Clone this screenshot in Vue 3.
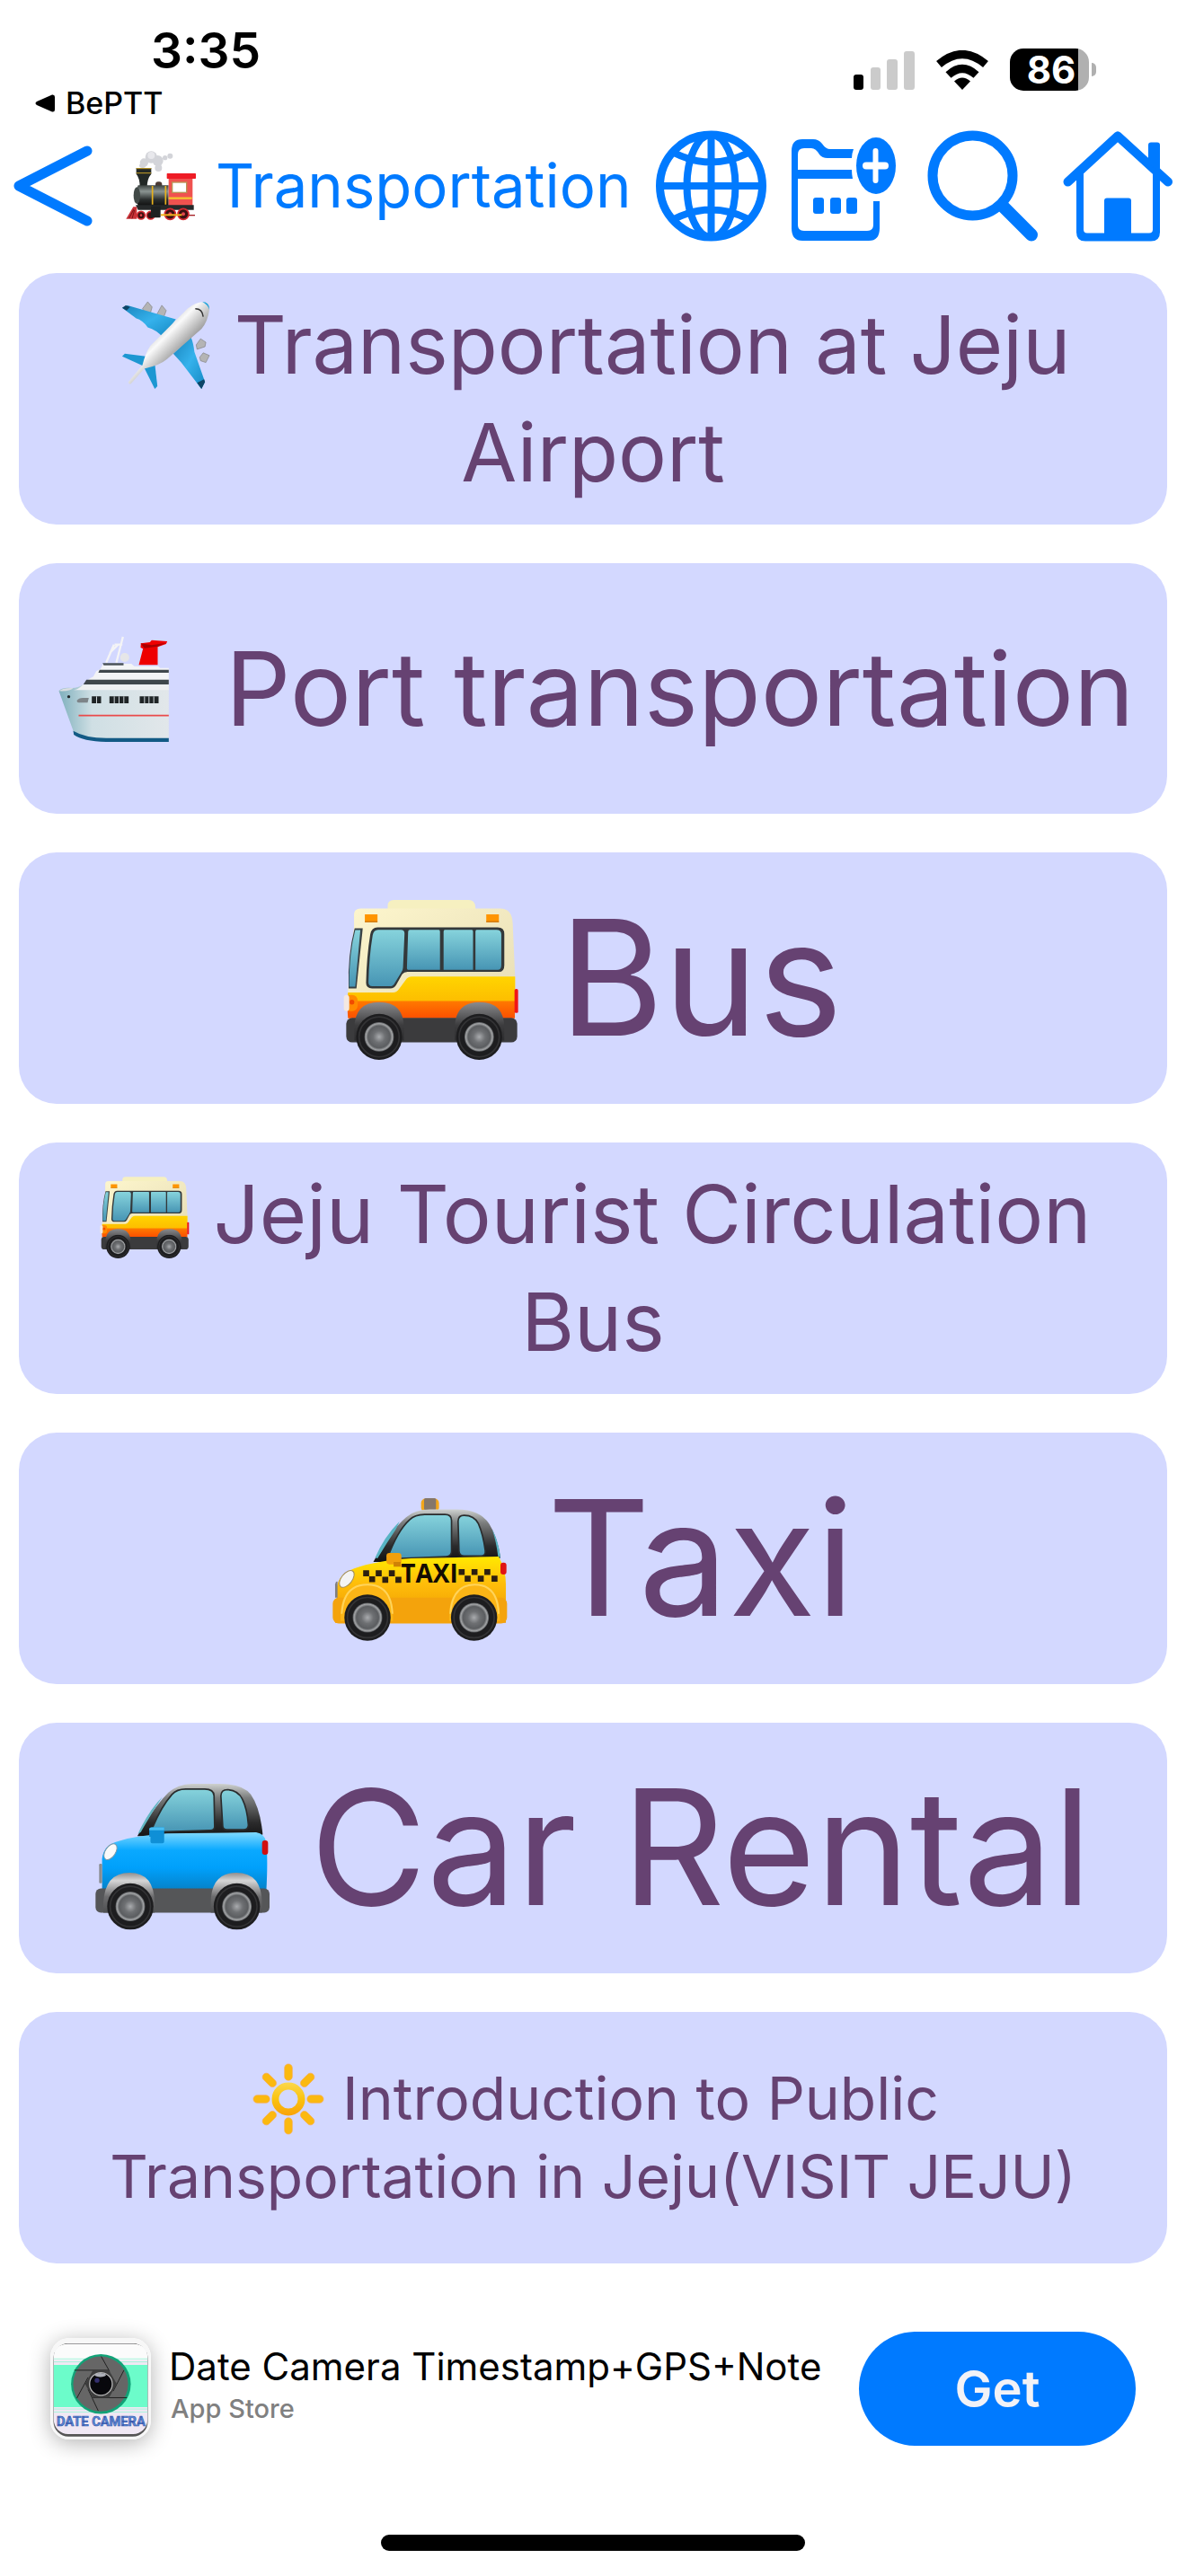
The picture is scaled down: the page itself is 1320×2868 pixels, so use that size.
<template>
  <div class="page">
    <!-- shared artwork -->
    <svg class="sprite" aria-hidden="true">
      <defs>
        <linearGradient id="glass" x1="0" y1="0" x2="0" y2="1">
          <stop offset="0" stop-color="#86d3dc" />
          <stop offset="1" stop-color="#4795b4" />
        </linearGradient>
        <linearGradient id="cream" x1="0" y1="0" x2="1" y2="1">
          <stop offset="0" stop-color="#fdf6cd" />
          <stop offset="1" stop-color="#e6dcb4" />
        </linearGradient>
        <linearGradient id="busYellow" x1="0" y1="0" x2="0" y2="1">
          <stop offset="0" stop-color="#ffd400" />
          <stop offset="1" stop-color="#fdbd00" />
        </linearGradient>
        <linearGradient id="busOrange" x1="0" y1="0" x2="0" y2="1">
          <stop offset="0" stop-color="#ff7a00" />
          <stop offset="1" stop-color="#fb4f00" />
        </linearGradient>
        <linearGradient id="arch" x1="0" y1="0" x2="0" y2="1">
          <stop offset="0" stop-color="#8b8b8d" />
          <stop offset="0.6" stop-color="#3c3c3e" />
          <stop offset="1" stop-color="#2c2c2e" />
        </linearGradient>
        <linearGradient id="carArch" x1="0" y1="0" x2="0" y2="1">
          <stop offset="0" stop-color="#8d8d8d" />
          <stop offset="0.2" stop-color="#d6d6d6" />
          <stop offset="0.6" stop-color="#6c6c6e" />
          <stop offset="1" stop-color="#4e4f51" />
        </linearGradient>
        <linearGradient id="roof" x1="0" y1="0" x2="0" y2="1">
          <stop offset="0" stop-color="#cfd2d0" />
          <stop offset="0.25" stop-color="#7d7f7f" />
          <stop offset="0.7" stop-color="#2b2b2c" />
          <stop offset="1" stop-color="#111" />
        </linearGradient>
        <linearGradient id="carBlue" x1="0" y1="0" x2="0" y2="1">
          <stop offset="0" stop-color="#7fd9ff" />
          <stop offset="0.3" stop-color="#0aa9ff" />
          <stop offset="0.6" stop-color="#00a0fb" />
          <stop offset="1" stop-color="#067fc4" />
        </linearGradient>
        <linearGradient id="taxiYellow" x1="0" y1="0" x2="0" y2="1">
          <stop offset="0" stop-color="#ffe900" />
          <stop offset="0.4" stop-color="#ffbe0a" />
          <stop offset="1" stop-color="#ee9600" />
        </linearGradient>
        <radialGradient id="hub">
          <stop offset="0" stop-color="#a9abae" />
          <stop offset="0.4" stop-color="#6e7073" />
          <stop offset="0.75" stop-color="#5b5d60" />
          <stop offset="0.9" stop-color="#a2a4a6" />
          <stop offset="1" stop-color="#55575a" />
        </radialGradient>
        <linearGradient id="hull" x1="0" y1="0" x2="1" y2="0">
          <stop offset="0" stop-color="#7fb0bd" />
          <stop offset="0.3" stop-color="#cfdfe4" />
          <stop offset="1" stop-color="#e2e7ea" />
        </linearGradient>
        <linearGradient id="wing" x1="0" y1="0" x2="1" y2="1">
          <stop offset="0" stop-color="#1a84bd" />
          <stop offset="0.5" stop-color="#35b2ec" />
          <stop offset="1" stop-color="#1487c2" />
        </linearGradient>
        <linearGradient id="body" x1="0.3" y1="0.3" x2="0.65" y2="0.65">
          <stop offset="0" stop-color="#b9b9b9" />
          <stop offset="0.4" stop-color="#fafafa" />
          <stop offset="1" stop-color="#8f8f8f" />
        </linearGradient>
        <linearGradient id="sunGold" gradientUnits="userSpaceOnUse" x1="0" y1="130" x2="0" y2="268">
          <stop offset="0" stop-color="#fcdc5a" />
          <stop offset="0.5" stop-color="#fac310" />
          <stop offset="1" stop-color="#f99a08" />
        </linearGradient>
        <linearGradient id="boiler" x1="0" y1="0" x2="0" y2="1">
          <stop offset="0" stop-color="#3b4240" />
          <stop offset="0.3" stop-color="#8b9492" />
          <stop offset="0.7" stop-color="#2a2e2e" />
          <stop offset="1" stop-color="#111" />
        </linearGradient>
      </defs>

      <symbol id="wheel" viewBox="0 0 160 160">
        <circle cx="80" cy="80" r="78" fill="#1d1d1f" />
        <circle cx="80" cy="80" r="68" fill="none" stroke="#333335" stroke-width="5" />
        <circle cx="80" cy="80" r="50" fill="url(#hub)" />
      </symbol>

      <symbol id="train" viewBox="84 50 240 240">
        <g fill="#d3d4d9">
          <circle cx="172" cy="74" r="20" />
          <circle cx="148" cy="92" r="14" />
          <circle cx="194" cy="86" r="18" />
          <circle cx="196" cy="110" r="12" />
          <circle cx="218" cy="76" r="8" />
          <circle cx="235" cy="70" r="9" />
          <ellipse cx="143" cy="102" rx="11" ry="8" />
        </g>
        <circle cx="172" cy="68" r="12" fill="#e8e8ec" />
        <rect x="186" y="156" width="22" height="22" rx="9" fill="#4b3a35" />
        <path d="M122 110h50v20q-14 16-14 44h-24q0-30-12-44z" fill="#222826" />
        <path d="M122 112h50M122 127h50" stroke="#c9a227" stroke-width="3" />
        <path d="M128 168h102v68H128q-16-34 0-68z" fill="url(#boiler)" />
        <ellipse cx="124" cy="202" rx="11" ry="28" fill="#414947" />
        <path d="M176 170v62M220 170v62" stroke="#e8b21c" stroke-width="5" />
        <path d="M230 140h80v96h-80z" fill="#f0524f" />
        <rect x="224" y="128" width="97" height="18" rx="2" fill="#ee1c25" />
        <rect x="242" y="158" width="48" height="34" fill="#fff" stroke="#b99254" stroke-width="4" />
        <path d="M230 211h78" stroke="#f4c430" stroke-width="7" />
        <path d="M120 234h194v16H128z" fill="#26292a" />
        <path d="M112 240l-24 40h36v-40z" fill="#c93238" />
        <path d="M98 278l16-30M108 279l8-28" stroke="#7a1418" stroke-width="3" />
        <g fill="#3b1012" stroke="#d52b33" stroke-width="5">
          <circle cx="138" cy="268" r="13" />
          <circle cx="170" cy="268" r="13" />
          <circle cx="235" cy="264" r="18" />
          <circle cx="279" cy="264" r="18" />
        </g>
        <g fill="#e2474d">
          <circle cx="138" cy="268" r="4" />
          <circle cx="235" cy="264" r="6" />
          <circle cx="279" cy="264" r="6" />
        </g>
        <path d="M296 268h22" stroke="#a51d23" stroke-width="4" />
        <rect x="171" y="238" width="32" height="38" rx="3" fill="#1d2021" />
        <path d="M204 267h70" stroke="#f2b31b" stroke-width="6" />
      </symbol>

      <symbol id="plane" viewBox="138 44 102 102">
        <g fill="#b4b4b4" stroke="#777" stroke-width="0.6">
          <path d="M168 46l5 6-2 7-6-1-3-4z" />
          <path d="M184 50l5 6-3 8-8-3z" />
          <path d="M228 88l6 4-1 5-9 3-1-5z" />
          <path d="M231 104l7 3-4 8-6-2-1-4z" />
        </g>
        <path d="M139 53l6-3 55 16-15 20q-7-8-17-11-6-8-13-10z" fill="url(#wing)" />
        <path d="M139 53l4-3 5 2-4 4z" fill="#0d4566" />
        <path d="M217 86q3 7 4 17l12 34-4 8-23-30-9-10z" fill="url(#wing)" />
        <path d="M233 137l-4 8-5-7 8-4z" fill="#0d4566" />
        <path d="M139 108l3-3 24 3-3 11z" fill="#1c97d2" />
        <path d="M164 121l12-5 3 26-3 3z" fill="#1c97d2" />
        <path d="M146 137l16-19q3-13 9-22l42-42q9-8 20-8 6 1 5 9-2 14-9 22l-39 34q-8 7-26 11l-15 17q-3 1-3-2z" fill="url(#body)" />
        <path d="M230 46q8 0 8 9-2-6-8-9z" fill="#1fa2e0" />
        <path d="M222 54q8 0 9 9" fill="none" stroke="#333" stroke-width="1.5" />
      </symbol>

      <symbol id="ship" viewBox="76 80 374 360">
        <path d="M238 172l26-60M272 172l22-86M266 112h26M250 140l28-28" stroke="#f4f4f6" stroke-width="7" fill="none" />
        <circle cx="300" cy="155" r="15" fill="#e6e6e8" />
        <path d="M347 180l14-54-8-4 1-14 30-4 6-7 52 4-4 9-28 10v60z" fill="#ee0000" />
        <path d="M353 108l37 6 48-8-28 12-44 6z" fill="#a90000" />
        <path d="M228 176h94l10 8h80l6 6h29v62H160l20-25 15-8 10-18 14-8z" fill="#f3f4f6" />
        <path d="M226 174h70v7h-66z" fill="#4b5359" />
        <path d="M216 196h231v10H212z" fill="#3f474c" />
        <path d="M172 229h275v16H162z" fill="#3f474c" />
        <path d="M80 267q10-13 44-10 20 0 38-12h285v190H220q-60-2-88-24z" fill="url(#hull)" />
        <path d="M80 267q14-12 48-10-10 12-48 10z" fill="#d9dde0" />
        <path d="M160 246h287v18H130q20-4 30-18z" fill="#eef0f2" />
        <path d="M128 400q40 24 110 24h209v13H238q-78-2-108-24z" fill="#125a85" />
        <path d="M146 349h301" stroke="#ea4a4a" stroke-width="5" />
        <path d="M140 299q6-9 20-9h20l-4 16h-30q-6 0-6-7z" fill="#7d8488" />
        <circle cx="113" cy="286" r="5" fill="#23282b" />
        <path d="M190 285h31v23h-31zM249 285h64v23h-64zM350 285h63v23h-63z" fill="#1f2426" />
        <path d="M206 285v23M265 285v23M281 285v23M297 285v23M366 285v23M381 285v23M397 285v23" stroke="#cfd6da" stroke-width="3" />
      </symbol>

      <symbol id="bus" viewBox="68 66 586 544" preserveAspectRatio="xMidYMax meet">
        <path d="M216 104V92q0-20 20-20h250q20 0 22 24v8z" fill="#f6f0c0" />
        <path d="M104 160v-40q0-20 22-20h466q38 0 40 50l8 180v136H84V370z" fill="url(#cream)" />
        <path d="M84 380h150q12 0 20-12l22-30q8-11 20-11h344v84H80z" fill="url(#busYellow)" />
        <path d="M80 408h559v58H84z" fill="url(#busOrange)" />
        <path d="M106 166h27L112 366H86q-4-110 20-200z" fill="#3a4245" />
        <path d="M108 172h17l-17 188H88q-1-110 20-188z" fill="url(#glass)" />
        <path d="M182 163h400q22 0 22 22v104q0 22-18 22H282q-12 0-18 8l-20 36q-6 11-20 11h-60q-20 0-20-18 2-88 14-162 4-23 24-23z" fill="#33383a" />
        <path d="M184 171h76q12 0 12 12l-5 114q0 8-6 16l-22 36q-5 10-16 10h-58q-14 0-13-14 2-84 14-156 3-18 18-18z" fill="url(#glass)" />
        <path d="M290 171h96q4 0 4 6v127H284q-4 0-4-6l4-120q0-7 6-7zM406 171h90q4 0 4 6v127h-98V177q0-6 4-6zM512 171h66q16 0 16 16v102q0 15-12 15h-74V177q0-6 4-6z" fill="url(#glass)" />
        <path d="M140 120h42v26h-42zM544 120h42v26h-42z" fill="#ff9500" />
        <path d="M140 142h42v4h-42zM544 142h42v4h-42z" fill="#c87410" />
        <rect x="638" y="368" width="12" height="80" rx="5" fill="#f01616" />
        <rect x="74" y="388" width="42" height="54" rx="18" fill="#ff8a00" />
        <rect x="70" y="388" width="18" height="54" rx="9" fill="#f3e8e2" />
        <circle cx="97" cy="412" r="8" fill="#f14a00" />
        <rect x="78" y="464" width="569" height="82" rx="20" fill="#3b3b3d" />
        <path d="M105 500q0-88 83-88t82 88v40H105zM439 500q0-88 83-88t82 88v40H439z" fill="url(#arch)" />
        <use href="#wheel" x="109" y="449" width="157" height="157" />
        <use href="#wheel" x="442" y="449" width="157" height="157" />
      </symbol>

      <symbol id="taxi" viewBox="58 80 590 484" preserveAspectRatio="xMidYMax meet">
        <rect x="358" y="84" width="60" height="44" rx="14" fill="#f3a71b" />
        <rect x="368" y="82" width="40" height="40" rx="5" fill="#85776a" />
        <path d="M198 296q56-104 110-150 30-26 80-26h90q76 0 108 48 28 44 38 114l-30 14z" fill="url(#roof)" />
        <path d="M204 282q30-70 82-122l-12 26q-30 44-62 98z" fill="#58b4c4" />
        <path d="M596 186q22 42 28 94l-8-2q-6-50-20-92z" fill="#58b4c4" />
        <path d="M246 282q32-90 74-128 16-16 50-17h68q22 0 22 20v104q0 16-18 17l-170 7z" fill="url(#glass)" stroke="#2a2c2d" stroke-width="5" />
        <path d="M482 160q0-20 20-20 34 0 48 28 16 36 23 90 2 18-14 18h-56q-16 0-18-16z" fill="url(#glass)" stroke="#2a2c2d" stroke-width="5" />
        <path d="M76 420V380q6-44 58-62 70-26 190-34l294-6q24 44 24 92v130H70z" fill="url(#taxiYellow)" />
        <path d="M70 416v-44q2-12 8-10v54z" fill="#7f7f80" />
        <rect x="62" y="416" width="584" height="86" rx="20" fill="#f4a30c" />
        <path d="M88 480q0-110 88-110t88 110v14H88zM452 480q0-110 86-110t84 110v14H452z" fill="#fbb516" />
        <path d="M92 470q6-98 86-98t84 98" fill="none" stroke="#ffd45a" stroke-width="6" />
        <path d="M456 470q6-98 82-98t80 98" fill="none" stroke="#ffd45a" stroke-width="6" />
        <rect x="242" y="266" width="50" height="38" rx="10" fill="#f2a00c" />
        <path d="M266 296h24v16h-24z" fill="#cf8205" />
        <ellipse cx="109" cy="353" rx="18" ry="33" transform="rotate(38 109 353)" fill="#f4f4f4" stroke="#a28f60" stroke-width="3" />
        <rect x="624" y="298" width="20" height="40" rx="9" fill="#e01414" />
        <path d="M164 324h20v20h-20zM206 324h20v20h-20zM250 324h20v20h-20zM184 344h20v20h-20zM228 346h20v20h-20zM272 346h20v20h-20zM484 320h20v20h-20zM527 320h20v20h-20zM570 320h20v20h-20zM504 342h20v20h-20zM548 342h20v20h-20zM594 342h20v20h-20z" fill="#2c1f10" />
        <use href="#wheel" x="99" y="403" width="159" height="159" />
        <use href="#wheel" x="456" y="403" width="159" height="159" />
      </symbol>

      <symbol id="car" viewBox="66 106 590 496" preserveAspectRatio="xMidYMax meet">
        <path d="M210 284q56-98 104-146 30-28 80-30h90q80 0 106 36 32 46 40 134l-20 16z" fill="url(#roof)" />
        <path d="M212 276q36-78 82-124-40 60-72 118z" fill="#62b6c2" />
        <path d="M256 268q30-78 70-124 16-18 46-18h64q30 0 31 22l2 104q0 12-14 12l-198 6z" fill="url(#glass)" stroke="#2a2c2d" stroke-width="5" />
        <path d="M490 150q0-22 22-22 36 2 50 32 16 32 20 86 0 16-16 16h-56q-14 0-14-14z" fill="url(#glass)" stroke="#2a2c2d" stroke-width="5" />
        <path d="M92 470V360q4-48 56-60 60-18 160-25l300-4q28 4 34 32 6 60 0 167z" fill="url(#carBlue)" />
        <rect x="82" y="376" width="10" height="66" rx="4" fill="#8a8d90" />
        <rect x="70" y="459" width="583" height="81" rx="18" fill="#555658" />
        <path d="M96 510q4-104 88-104t84 104v30H96zM456 510q0-104 86-104t86 104v30H456z" fill="url(#carArch)" />
        <path d="M250 260q0-6 8-6h42v48q0 6-6 6h-34q-6 0-6-6v-16h-4z" fill="#0f8fd6" />
        <path d="M250 260q0-6 8-6h42v10h-50z" fill="#49bdf2" />
        <ellipse cx="120" cy="336" rx="17" ry="30" transform="rotate(34 120 336)" fill="#fafafa" stroke="#7b98a8" stroke-width="3" />
        <rect x="628" y="298" width="20" height="48" rx="9" fill="#d01010" />
        <use href="#wheel" x="107" y="440" width="159" height="159" />
        <use href="#wheel" x="464" y="440" width="159" height="159" />
      </symbol>

      <symbol id="sun" viewBox="108 78 242 242">
        <circle cx="229" cy="199" r="44" fill="none" stroke="url(#sunGold)" stroke-width="24" />
        <rect
          v-for="n in 8"
          :key="n"
          x="216"
          y="81"
          width="26"
          height="55"
          rx="13"
          fill="#fbb90f"
          stroke="#fba94a"
          stroke-width="2"
          :transform="`rotate(${n * 45} 229 199)`"
        />
      </symbol>
    </svg>

    <div class="status-bar">
      <div class="status-left">
        <div class="time">3:35</div>
        <a class="back-app" href="#">
          <svg width="22" height="20" viewBox="0 0 22 20"><path d="M2 8L19 0.5Q22 0 22 3V17Q22 20 19 19.5L2 12Q-1 10 2 8z" /></svg>
          BePTT
        </a>
      </div>
      <div class="status-right">
        <svg width="68" height="44" viewBox="0 0 68 44">
          <rect x="0" y="27" width="11" height="17" rx="3" />
          <g fill="#cbcbcb">
            <rect x="19" y="19" width="11" height="25" rx="3" />
            <rect x="37" y="10" width="12" height="34" rx="3" />
            <rect x="56" y="1" width="12" height="43" rx="3" />
          </g>
        </svg>
        <svg width="60" height="44" viewBox="0 0 60 44">
          <path d="M30 44l-9-9.500q9-8 18 0z" />
          <path d="M14.500 27.500q15.500-14 31 0" fill="none" stroke="#000" stroke-width="9" />
          <path d="M4 15.500q26-22 52 0" fill="none" stroke="#000" stroke-width="9" />
        </svg>
        <div class="battery">
          <span class="battery-level">86</span>
          <span class="battery-nub"></span>
        </div>
      </div>
    </div>

    <header class="nav">
      <button class="icon-btn" aria-label="Back">
        <svg width="89" height="90" viewBox="0 0 89 90">
          <path d="M83 6L7 45L83 84" fill="none" stroke="#007aff" stroke-width="11" stroke-linecap="round" stroke-linejoin="round" />
        </svg>
      </button>
      <h1 class="title">
        <svg class="title-emoji" aria-hidden="true"><use href="#train" /></svg>
        <span>Transportation</span>
      </h1>
      <div class="actions">
        <button class="icon-btn" aria-label="Language">
          <svg width="123" height="124" viewBox="0 0 123 123" fill="none" stroke="#007aff" stroke-width="8">
            <circle cx="61.500" cy="61.500" r="57" stroke-width="9" />
            <ellipse cx="61.500" cy="61.500" rx="27" ry="57" />
            <path d="M61.500 4v115M4 61.500h115M21 25Q61.500 45 102 25M21 98Q61.500 78 102 98" />
          </svg>
        </button>
        <button class="icon-btn" aria-label="Add to schedule">
          <svg width="123" height="124" viewBox="0 -10 123 124" fill="#007aff">
            <path d="M0 13Q0 0 12 0H24Q30 0 34 5Q38 11 43 11H69Q67 16 67 21H40Q34 21 31 17Q27 10 22 10H14Q7 10 7 17V34H67Q67 39 68 44H7V95Q7 102 14 102H84Q91 102 91 95V69H98V99Q98 113 86 113H12Q0 113 0 99z" />
            <rect x="24" y="65" width="12" height="18" rx="3" />
            <rect x="43" y="65" width="12" height="18" rx="3" />
            <rect x="61" y="65" width="12" height="18" rx="3" />
            <ellipse cx="94" cy="29.500" rx="22" ry="31.500" />
            <path d="M83 29.500h21" stroke="#fff" stroke-width="8" stroke-linecap="round" />
            <path d="M93.500 13v33" stroke="#fff" stroke-width="6" stroke-linecap="round" />
          </svg>
        </button>
        <button class="icon-btn" aria-label="Search">
          <svg width="123" height="124" viewBox="0 0 123 123" fill="none" stroke="#007aff">
            <circle cx="50.500" cy="50" r="44.500" stroke-width="11" />
            <path d="M85 85L116 116" stroke-width="14" stroke-linecap="round" />
          </svg>
        </button>
        <button class="icon-btn" aria-label="Home">
          <svg width="123" height="124" viewBox="0 0 123 123" fill="none" stroke="#007aff">
            <path d="M5.500 57L61 6L117 57" stroke-width="10" stroke-linecap="round" stroke-linejoin="round" />
            <path d="M95 36V16Q95 13 98 13H105Q108 13 108 16V48z" fill="#007aff" stroke="none" />
            <path d="M15 46L23 40V110Q23 114 27 114H46V78Q46 75 49 75H73Q76 75 76 78V114H96Q100 114 100 110V40L108 46V113Q108 123 98 123H25Q15 123 15 113z" fill="#007aff" stroke="none" />
          </svg>
        </button>
      </div>
    </header>

    <main class="list">
      <button v-for="item in items" :key="item.id" class="card" :class="item.size">
        <span v-for="(line, i) in item.lines" :key="i" class="line">
          <svg v-if="i === 0" class="emoji" aria-hidden="true">
            <use :href="'#' + item.icon" />
            <text v-if="item.icon === 'taxi'" x="109" y="120" text-anchor="middle" class="taxi-text">TAXI</text>
          </svg>
          <span>{{ line }}</span>
        </span>
      </button>
    </main>

    <aside class="ad">
      <svg class="ad-icon" viewBox="80 98 336 340" aria-hidden="true">
        <rect x="80" y="98" width="336" height="340" rx="62" fill="#f7f7f7" />
        <rect x="90" y="116" width="316" height="312" rx="50" fill="#555" />
        <rect x="91" y="118" width="314" height="302" rx="48" fill="#f0e8f4" />
        <path d="M91 172v-8q0-46 48-46h218q48 0 48 46v8z" fill="#fbfbfb" />
        <path d="M91 188h314v142H91z" fill="#6cfcca" />
        <path d="M91 168h314M91 178h314M91 336h314M91 346h314" stroke="#a8f5dc" stroke-width="3" />
        <circle cx="249" cy="252" r="100" fill="#12a277" />
        <circle cx="248" cy="252" r="92" fill="#666" />
        <path d="M250 160l28 50M160 206h114M168 300l38-70M240 342l-34-72M336 298H222M326 206l-36 70" stroke="#222" stroke-width="3" />
        <path d="M222 206h54l26 46-26 46h-54l-26-46z" fill="#3d3d3d" />
        <circle cx="249" cy="252" r="38" fill="#08080c" stroke="#b5b5b5" stroke-width="4" />
        <ellipse cx="247" cy="222" rx="18" ry="7" fill="#aeb0b8" />
        <circle cx="236" cy="240" r="8" fill="#34306e" />
        <text x="249" y="392" text-anchor="middle" class="ad-icon-text">DATE CAMERA</text>
      </svg>
      <div class="ad-text">
        <div class="ad-title">Date Camera Timestamp+GPS+Note</div>
        <div class="ad-sub">App Store</div>
      </div>
      <button class="get-btn">Get</button>
    </aside>

    <div class="home-indicator"></div>
  </div>
</template>

<script setup>
import { ref } from 'vue';

const items = ref([
  { id: 1, icon: 'plane', size: 'md', lines: ['Transportation at Jeju', 'Airport'] },
  { id: 2, icon: 'ship', size: 'lg', lines: ['Port transportation'] },
  { id: 3, icon: 'bus', size: 'xl', lines: ['Bus'] },
  { id: 4, icon: 'bus', size: 'md', lines: ['Jeju Tourist Circulation', 'Bus'] },
  { id: 5, icon: 'taxi', size: 'xl', lines: ['Taxi'] },
  { id: 6, icon: 'car', size: 'xl', lines: ['Car Rental'] },
  { id: 7, icon: 'sun', size: 'sm', lines: ['Introduction to Public', 'Transportation in Jeju(VISIT JEJU)'] }
]);
</script>

<style>
body {
  margin: 0;
  background: #fff;
}
</style>

<style scoped>
.page {
  display: flex;
  flex-direction: column;
  min-height: 100vh;
  box-sizing: border-box;
  padding-bottom: 28px;
  font-family: Inter, "Liberation Sans", sans-serif;
  color: #000;
}

.sprite {
  position: absolute;
  width: 0;
  height: 0;
}

button {
  border: none;
  padding: 0;
  font-family: inherit;
  cursor: pointer;
}

svg {
  display: block;
  flex-shrink: 0;
}

.status-bar {
  display: flex;
  justify-content: space-between;
  height: 140px;
}

.status-left {
  padding-top: 26px;
}

.time {
  padding-left: 168px;
  font-size: 55px;
  line-height: 60px;
  font-weight: 600;
}

.back-app {
  display: flex;
  align-items: center;
  gap: 12px;
  margin-top: 9px;
  padding-left: 39px;
  font-size: 34px;
  line-height: 40px;
  font-weight: 500;
  color: #000;
  text-decoration: none;
}

.status-right {
  display: flex;
  align-items: center;
  gap: 23px;
  height: 47px;
  padding: 54px 100px 0 0;
}

.battery {
  display: flex;
  align-items: center;
  gap: 3px;
}

.battery-level {
  width: 88px;
  box-sizing: border-box;
  padding-left: 4px;
  border-radius: 15px;
  background: linear-gradient(to right, #000 86%, #b0b0b0 86%);
  color: #fff;
  font-size: 42px;
  line-height: 47px;
  font-weight: 700;
  text-align: center;
}

.battery-nub {
  width: 5px;
  height: 15px;
  border-radius: 0 5px 5px 0;
  background: #b0b0b0;
}

.nav {
  display: flex;
  align-items: center;
  height: 134px;
  padding: 0 14px;
}

.icon-btn {
  background: none;
}

.title {
  display: flex;
  align-items: center;
  gap: 21px;
  margin: 0 0 0 36px;
  font-size: 67px;
  line-height: 88px;
  font-weight: 400;
  color: #007aff;
  white-space: nowrap;
}

.title-emoji {
  width: 80px;
  height: 80px;
}

.actions {
  display: flex;
  gap: 28px;
  margin-left: auto;
}

.list {
  flex: 1;
  display: grid;
  grid-auto-rows: 1fr;
  gap: 43px;
  padding: 30px 21px 0;
}

.card {
  display: flex;
  flex-direction: column;
  align-items: center;
  justify-content: center;
  border-radius: 42px;
  background: #d3d8ff;
  color: #664272;
  white-space: nowrap;
}

.line {
  display: flex;
  align-items: center;
}

.sm {
  font-size: 66px;
  line-height: 87px;
}

.md {
  font-size: 90px;
  line-height: 120px;
}

.lg {
  font-size: 114px;
  line-height: 150px;
}

.xl {
  font-size: 178px;
  line-height: 230px;
}

.emoji {
  width: 100px;
  height: 100px;
  margin-left: 6px;
  margin-right: 26px;
}

.lg .emoji {
  width: 125px;
  height: 120px;
  margin-right: 62px;
}

.xl .emoji {
  width: 196px;
  height: 186px;
  margin-left: 0;
  margin-right: 44px;
}

.sm .emoji {
  width: 80px;
  height: 80px;
  margin-right: 20px;
}

.taxi-text {
  font-family: "Open Sans", sans-serif;
  font-size: 28px;
  font-weight: 700;
  fill: #140c02;
}

.ad {
  display: flex;
  align-items: center;
  margin-top: 76px;
  padding: 0 56px;
}

.ad-icon {
  width: 112px;
  height: 113px;
  border-radius: 21px;
  box-shadow: 0 4px 24px rgba(0, 0, 0, 0.3);
}

.ad-icon-text {
  font-family: Roboto, "Liberation Sans", sans-serif;
  font-size: 44px;
  font-weight: 700;
  fill: #5b8fdc;
  stroke: #3a56a8;
  stroke-width: 2;
}

.ad-text {
  margin-left: 20px;
  padding-bottom: 8px;
}

.ad-title {
  font-size: 42px;
  line-height: 52px;
}

.ad-sub {
  padding-left: 2px;
  font-size: 29px;
  line-height: 42px;
  font-weight: 500;
  color: #808080;
}

.get-btn {
  width: 308px;
  height: 127px;
  margin-left: auto;
  border-radius: 64px;
  background: #007aff;
  color: #f2f2f7;
  font-size: 56px;
  font-weight: 600;
}

.home-indicator {
  width: 472px;
  height: 18px;
  margin: 99px auto 0;
  border-radius: 9px;
  background: #000;
}
</style>
